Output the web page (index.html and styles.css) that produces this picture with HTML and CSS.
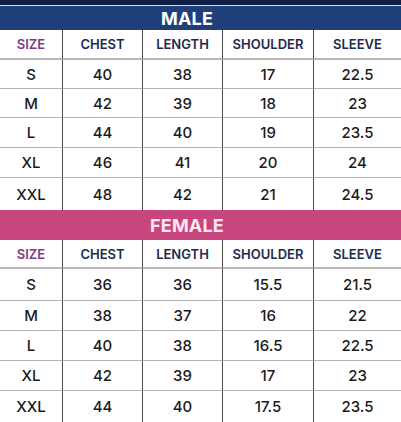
FILE: index.html
```html
<!DOCTYPE html>
<html>
<head>
<meta charset="utf-8">
<link rel="stylesheet" href="styles.css">
</head>
<body>
<div class="page">
  <div class="topstrip"></div>
  <div class="topline"></div>
  <div class="band band-male">MALE</div>
  <div class="grid grid-male">
    <div class="c h size">SIZE</div><div class="c h">CHEST</div><div class="c h">LENGTH</div><div class="c h">SHOULDER</div><div class="c h last">SLEEVE</div>
    <div class="c">S</div><div class="c">40</div><div class="c">38</div><div class="c">17</div><div class="c last">22.5</div>
    <div class="c">M</div><div class="c">42</div><div class="c">39</div><div class="c">18</div><div class="c last">23</div>
    <div class="c">L</div><div class="c">44</div><div class="c">40</div><div class="c">19</div><div class="c last">23.5</div>
    <div class="c">XL</div><div class="c">46</div><div class="c">41</div><div class="c">20</div><div class="c last">24</div>
    <div class="c nb">XXL</div><div class="c nb">48</div><div class="c nb">42</div><div class="c nb">21</div><div class="c nb last">24.5</div>
  </div>
  <div class="band band-female">FEMALE</div>
  <div class="grid grid-female">
    <div class="c h size">SIZE</div><div class="c h">CHEST</div><div class="c h">LENGTH</div><div class="c h">SHOULDER</div><div class="c h last">SLEEVE</div>
    <div class="c">S</div><div class="c">36</div><div class="c">36</div><div class="c">15.5</div><div class="c last">21.5</div>
    <div class="c">M</div><div class="c">38</div><div class="c">37</div><div class="c">16</div><div class="c last">22</div>
    <div class="c">L</div><div class="c">40</div><div class="c">38</div><div class="c">16.5</div><div class="c last">22.5</div>
    <div class="c">XL</div><div class="c">42</div><div class="c">39</div><div class="c">17</div><div class="c last">23</div>
    <div class="c nb">XXL</div><div class="c nb">44</div><div class="c nb">40</div><div class="c nb">17.5</div><div class="c nb last">23.5</div>
  </div>
</div>
</body>
</html>
```

FILE: styles.css
```css
html, body {
  margin: 0;
  padding: 0;
  background: #ffffff;
}
.page {
  width: 401px;
  height: 422px;
  overflow: hidden;
  font-family: Inter, "Open Sans", sans-serif;
}
.topstrip {
  height: 5px;
  background: #0f1e44;
}
.topline {
  height: 1px;
  background: #d8e0ec;
}
.band {
  display: flex;
  align-items: center;
  justify-content: center;
  padding-right: 27px;
  font-weight: 700;
  font-size: 18px;
  letter-spacing: 0.2px;
}
.band-male {
  height: 24px;
  background: #1f3f7b;
  color: #ffffff;
}
.band-female {
  height: 30px;
  background: #c8467e;
  color: #fde6f0;
}
.grid {
  display: grid;
  grid-template-columns: 63px 80px 80px 91px 1fr;
}
.grid-male {
  grid-template-rows: 30px 29px 29px 30px 30px 32px;
}
.grid-female {
  grid-template-rows: 29px 32px 30px 30px 30px 31px;
}
.c {
  display: flex;
  align-items: center;
  justify-content: center;
  border-right: 1px solid #4a4a4a;
  border-bottom: 1px solid #b4b4b4;
  font-size: 15px;
  font-weight: 500;
  color: #1a1a1a;
}
.c.last {
  border-right: none;
}
.c.nb {
  border-bottom: none;
}
.c.h {
  font-size: 13px;
  font-weight: 600;
  color: #1d2b4f;
  border-bottom-width: 2px;
  border-bottom-color: #b8b8b8;
}
.c.size {
  color: #7b3b86;
}
```
